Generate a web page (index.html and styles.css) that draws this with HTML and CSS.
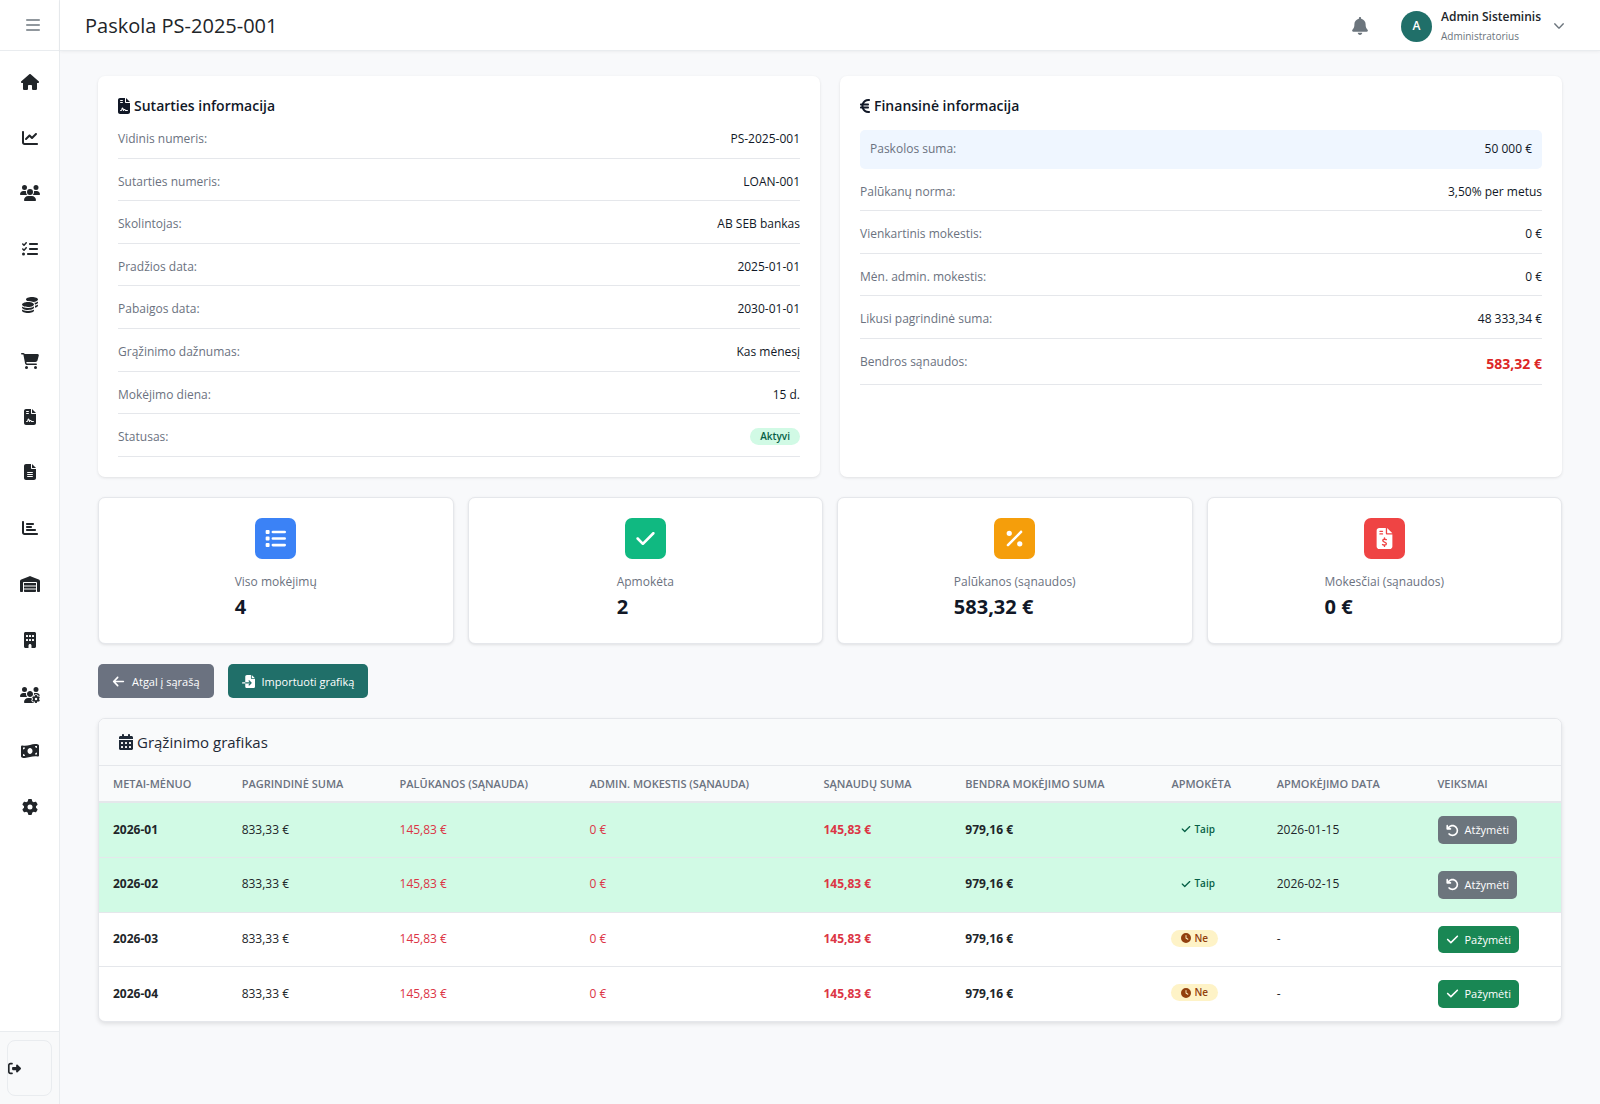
FILE: index.html
```html
<!DOCTYPE html>
<html lang="lt">
<head>
    <meta charset="UTF-8">
    <meta name="viewport" content="width=device-width, initial-scale=1.0">
    <title>Paskola PS-2025-001</title>
    <link rel="stylesheet" href="styles.css">
</head>
<body>
    <svg class="sprite" aria-hidden="true">
        <symbol id="i-bars" viewBox="0 0 448 512"><path d="M24 72h400a24 24 0 0 1 0 48H24a24 24 0 0 1 0-48zM24 232h400a24 24 0 0 1 0 48H24a24 24 0 0 1 0-48zM24 392h400a24 24 0 0 1 0 48H24a24 24 0 0 1 0-48z"/></symbol>
        <symbol id="i-home" viewBox="0 0 576 512"><path d="M575.8 255.5c0 18-15 32.1-32 32.1l-32 0 .7 160.2c0 2.7-.2 5.4-.5 8.1l0 16.2c0 22.1-17.9 40-40 40l-16 0c-1.1 0-2.2 0-3.3-.1c-1.4 .1-2.8 .1-4.2 .1L416 512l-24 0c-22.1 0-40-17.9-40-40l0-24 0-64c0-17.7-14.3-32-32-32l-64 0c-17.7 0-32 14.3-32 32l0 64 0 24c0 22.1-17.9 40-40 40l-24 0-31.9 0c-1.5 0-3-.1-4.5-.2c-1.2 .1-2.4 .2-3.6 .2l-16 0c-22.1 0-40-17.9-40-40l0-112c0-.9 0-1.9 .1-2.8l0-69.7-32 0c-18 0-32-14-32-32.1c0-9 3-17 10-24L266.4 8c7-7 15-8 22-8s15 2 21 7L564.8 231.5c8 7 12 15 11 24z"/></symbol>
        <symbol id="i-chart-line" viewBox="0 0 512 512"><path d="M64 64c0-17.7-14.3-32-32-32S0 46.3 0 64L0 400c0 44.2 35.8 80 80 80l400 0c17.7 0 32-14.3 32-32s-14.3-32-32-32L80 416c-8.8 0-16-7.2-16-16L64 64zm406.6 86.6c12.5-12.5 12.5-32.8 0-45.3s-32.8-12.5-45.3 0L320 210.7l-57.4-57.4c-12.5-12.5-32.8-12.5-45.3 0l-112 112c-12.5 12.5-12.5 32.8 0 45.3s32.8 12.5 45.3 0L240 221.3l57.4 57.4c12.5 12.5 32.8 12.5 45.3 0l128-128z"/></symbol>
        <symbol id="i-users" viewBox="0 0 640 512"><path d="M144 0a80 80 0 1 1 0 160A80 80 0 1 1 144 0zM512 0a80 80 0 1 1 0 160A80 80 0 1 1 512 0zM0 298.7C0 239.8 47.8 192 106.7 192l42.7 0c15.9 0 31 3.5 44.6 9.7c-1.3 7.2-1.9 14.7-1.9 22.3c0 38.2 16.8 72.5 43.3 96c-.2 0-.4 0-.7 0L21.3 320C9.6 320 0 310.4 0 298.7zM405.3 320c-.2 0-.4 0-.7 0c26.6-23.5 43.3-57.8 43.3-96c0-7.6-.7-15-1.9-22.3c13.6-6.3 28.7-9.7 44.6-9.7l42.7 0C592.2 192 640 239.8 640 298.7c0 11.8-9.6 21.3-21.3 21.3l-213.3 0zM224 224a96 96 0 1 1 192 0 96 96 0 1 1 -192 0zM128 485.3C128 411.7 187.7 352 261.3 352l117.3 0C452.3 352 512 411.7 512 485.3c0 14.7-11.9 26.7-26.7 26.7l-330.7 0c-14.7 0-26.7-11.9-26.7-26.7z"/></symbol>
        <symbol id="i-tasks" viewBox="0 0 512 512"><path d="M152.1 38.2c9.9 8.9 10.7 24 1.8 33.9l-72 80c-4.4 4.9-10.6 7.8-17.2 7.9s-12.9-2.4-17.6-7L7 113C-2.3 103.6-2.3 88.4 7 79s24.6-9.4 33.9 0l22.1 22.1 55.1-61.2c8.9-9.9 24-10.7 33.9-1.8zm0 160c9.9 8.9 10.7 24 1.8 33.9l-72 80c-4.4 4.9-10.6 7.8-17.2 7.9s-12.9-2.4-17.6-7L7 273c-9.4-9.4-9.4-24.6 0-33.9s24.6-9.4 33.9 0l22.1 22.1 55.1-61.2c8.9-9.9 24-10.7 33.9-1.8zM224 96c0-17.7 14.3-32 32-32l224 0c17.7 0 32 14.3 32 32s-14.3 32-32 32l-224 0c-17.7 0-32-14.3-32-32zm0 160c0-17.7 14.3-32 32-32l224 0c17.7 0 32 14.3 32 32s-14.3 32-32 32l-224 0c-17.7 0-32-14.3-32-32zM160 416c0-17.7 14.3-32 32-32l288 0c17.7 0 32 14.3 32 32s-14.3 32-32 32l-288 0c-17.7 0-32-14.3-32-32zM48 368a48 48 0 1 1 0 96 48 48 0 1 1 0-96z"/></symbol>
        <symbol id="i-coins" viewBox="0 0 512 512"><path d="M512 80c0 18-14.3 34.6-38.4 48c-29.1 16.1-72.5 27.5-122.3 30.9c-3.7-1.8-7.4-3.5-11.3-5C300.6 137.4 248.2 128 192 128c-8.3 0-16.4 .2-24.5 .6l-1.1-.6C142.3 114.6 128 98 128 80c0-44.2 86-80 192-80S512 35.8 512 80zM160.7 161.1c10.2-.7 20.7-1.1 31.3-1.1c62.2 0 117.4 12.3 152.5 31.4C369.3 204.9 384 221.7 384 240c0 4-.7 7.9-2.1 11.7c-4.6 13.2-17 25.3-35 35.5c-.4 .2-.9 .5-1.3 .7c-35 19.4-90.8 32-153.6 32c-59.6 0-112.9-11.3-148.2-29.1c-1.9-.9-3.7-1.9-5.5-2.9C14.3 274.6 0 258 0 240c0-34.8 53.4-64.5 128-75.4c10.5-1.5 21.4-2.7 32.7-3.5zM416 240c0-21.9-10.6-39.9-24.1-53.4c28.3-4.4 54.2-11.4 76.2-20.5c16.3-6.8 31.5-15.2 43.9-25.5l0 35.4c0 19.3-16.5 37.1-43.8 50.9c-14.6 7.4-32.4 13.7-52.4 18.5c.1-1.8 .2-3.5 .2-5.3zm-32 96c0 18-14.3 34.6-38.4 48c-1.8 1-3.6 1.9-5.5 2.9C304.9 404.7 251.6 416 192 416c-62.8 0-118.6-12.6-153.6-32C14.3 370.6 0 354 0 336l0-35.4c12.5 10.3 27.6 18.7 43.9 25.5C83.4 342.6 135.8 352 192 352s108.6-9.4 148.1-25.9c7.8-3.2 15.3-6.9 22.4-10.9c6.1-3.4 11.8-7.2 17.2-11.2c1.5-1.1 2.9-2.3 4.3-3.4l0 3.4 0 5.7 0 26.3zm32 0l0-32 0-25.9c19-4.2 36.5-9.5 52.1-16c16.3-6.8 31.5-15.2 43.9-25.5l0 35.4c0 10.5-5 21-14.9 30.9c-16.3 16.3-45 29.7-81.3 38.4c.1-1.7 .2-3.5 .2-5.3zM192 448c56.2 0 108.6-9.4 148.1-25.9c16.3-6.8 31.5-15.2 43.9-25.5l0 35.4c0 44.2-86 80-192 80S0 476.2 0 432l0-35.4c12.5 10.3 27.6 18.7 43.9 25.5C83.4 438.6 135.8 448 192 448z"/></symbol>
        <symbol id="i-cart" viewBox="0 0 576 512"><path d="M0 24C0 10.7 10.7 0 24 0L69.5 0c22 0 41.5 12.8 50.6 32l411 0c26.3 0 45.5 25 38.6 50.4l-41 152.3c-8.5 31.4-37 53.3-69.5 53.3l-288.5 0 5.4 28.5c2.2 11.3 12.1 19.5 23.6 19.5L488 336c13.3 0 24 10.7 24 24s-10.7 24-24 24l-288.3 0c-34.6 0-64.3-24.6-70.7-58.5L77.4 54.5c-.7-3.8-4-6.5-7.9-6.5L24 48C10.7 48 0 37.3 0 24zM128 464a48 48 0 1 1 96 0 48 48 0 1 1 -96 0zm336-48a48 48 0 1 1 0 96 48 48 0 1 1 0-96z"/></symbol>
        <symbol id="i-contract" viewBox="0 0 384 512"><path fill-rule="evenodd" d="M64 0C28.7 0 0 28.7 0 64L0 448c0 35.3 28.7 64 64 64l256 0c35.3 0 64-28.7 64-64l0-288-128 0c-17.7 0-32-14.3-32-32L224 0 64 0zM256 0l0 128 128 0L256 0zM80 64l64 0c8.8 0 16 7.2 16 16s-7.2 16-16 16L80 96c-8.8 0-16-7.2-16-16s7.2-16 16-16zm0 64l64 0c8.8 0 16 7.2 16 16s-7.2 16-16 16l-64 0c-8.8 0-16-7.2-16-16s7.2-16 16-16zm54.2 253.8c-6.1 20.3-24.8 34.2-46 34.2L80 416c-8.8 0-16-7.2-16-16s7.2-16 16-16l8.2 0c7.1 0 13.3-4.6 15.3-11.4l14.9-49.5c3.4-11.3 13.8-19.1 25.6-19.1s22.2 7.7 25.6 19.1l11.6 38.6c7.4-6.2 16.8-9.7 26.8-9.7c15.9 0 30.4 9 37.5 23.2l4.4 8.8 54.1 0c8.8 0 16 7.2 16 16s-7.2 16-16 16l-64 0c-6.1 0-11.6-3.4-14.3-8.8l-8.8-17.7c-1.7-3.4-5.1-5.5-8.8-5.5s-7.2 2.1-8.8 5.5l-8.8 17.7c-2.9 5.9-9.2 9.4-15.7 8.8s-12.1-5.1-13.9-11.3L144 349l-9.8 32.8z"/></symbol>
        <symbol id="i-file" viewBox="0 0 384 512"><path fill-rule="evenodd" d="M64 0C28.7 0 0 28.7 0 64L0 448c0 35.3 28.7 64 64 64l256 0c35.3 0 64-28.7 64-64l0-288-128 0c-17.7 0-32-14.3-32-32L224 0 64 0zM256 0l0 128 128 0L256 0zM112 256l160 0c8.8 0 16 7.2 16 16s-7.2 16-16 16l-160 0c-8.8 0-16-7.2-16-16s7.2-16 16-16zm0 64l160 0c8.8 0 16 7.2 16 16s-7.2 16-16 16l-160 0c-8.8 0-16-7.2-16-16s7.2-16 16-16zm0 64l160 0c8.8 0 16 7.2 16 16s-7.2 16-16 16l-160 0c-8.8 0-16-7.2-16-16s7.2-16 16-16z"/></symbol>
        <symbol id="i-chart-bar" viewBox="0 0 512 512"><path d="M32 32c17.7 0 32 14.3 32 32l0 336c0 8.8 7.2 16 16 16l400 0c17.7 0 32 14.3 32 32s-14.3 32-32 32L80 480c-44.2 0-80-35.8-80-80L0 64C0 46.3 14.3 32 32 32zm96 96c0-17.7 14.3-32 32-32l192 0c17.7 0 32 14.3 32 32s-14.3 32-32 32l-192 0c-17.7 0-32-14.3-32-32zm32 64l128 0c17.7 0 32 14.3 32 32s-14.3 32-32 32l-128 0c-17.7 0-32-14.3-32-32s14.3-32 32-32zm0 96l256 0c17.7 0 32 14.3 32 32s-14.3 32-32 32l-256 0c-17.7 0-32-14.3-32-32s14.3-32 32-32z"/></symbol>
        <symbol id="i-warehouse" viewBox="0 0 640 512"><path d="M0 488L0 171.3c0-26.2 15.9-49.7 40.2-59.4L308.1 4.8c7.6-3.1 16.1-3.1 23.8 0L599.8 111.9c24.3 9.7 40.2 33.3 40.2 59.4L640 488c0 13.3-10.7 24-24 24l-48 0c-13.3 0-24-10.7-24-24l0-264c0-17.7-14.3-32-32-32l-384 0c-17.7 0-32 14.3-32 32l0 264c0 13.3-10.7 24-24 24l-48 0c-13.3 0-24-10.7-24-24zm488 24l-336 0c-13.3 0-24-10.7-24-24l0-56 384 0 0 56c0 13.3-10.7 24-24 24zM128 400l0-64 384 0 0 64-384 0zm0-96l0-80 384 0 0 80-384 0z"/></symbol>
        <symbol id="i-building" viewBox="0 0 384 512"><path fill-rule="evenodd" d="M48 0C21.5 0 0 21.5 0 48L0 464c0 26.5 21.5 48 48 48l96 0 0-80c0-26.5 21.5-48 48-48s48 21.5 48 48l0 80 96 0c26.5 0 48-21.5 48-48l0-416c0-26.5-21.5-48-48-48L48 0zM80 96h32a16 16 0 0 1 16 16v32a16 16 0 0 1-16 16H80a16 16 0 0 1-16-16v-32a16 16 0 0 1 16-16zM176 96h32a16 16 0 0 1 16 16v32a16 16 0 0 1-16 16h-32a16 16 0 0 1-16-16v-32a16 16 0 0 1 16-16zM272 96h32a16 16 0 0 1 16 16v32a16 16 0 0 1-16 16h-32a16 16 0 0 1-16-16v-32a16 16 0 0 1 16-16zM80 224h32a16 16 0 0 1 16 16v32a16 16 0 0 1-16 16H80a16 16 0 0 1-16-16v-32a16 16 0 0 1 16-16zM176 224h32a16 16 0 0 1 16 16v32a16 16 0 0 1-16 16h-32a16 16 0 0 1-16-16v-32a16 16 0 0 1 16-16zM272 224h32a16 16 0 0 1 16 16v32a16 16 0 0 1-16 16h-32a16 16 0 0 1-16-16v-32a16 16 0 0 1 16-16z"/></symbol>
        <symbol id="i-users-cog" viewBox="0 0 640 512"><path d="M144 160A80 80 0 1 0 144 0a80 80 0 1 0 0 160zm368 0A80 80 0 1 0 512 0a80 80 0 1 0 0 160zM0 298.7C0 310.4 9.6 320 21.3 320l213.3 0c.2 0 .4 0 .7 0c-26.6-23.5-43.3-57.8-43.3-96c0-7.6 .7-15 1.9-22.3c-13.6-6.3-28.7-9.7-44.6-9.7l-42.7 0C47.8 192 0 239.8 0 298.7zM320 320c24 0 45.9-8.8 62.7-23.3c2.5-3.7 5.2-7.3 8-10.7c2.7-3.3 5.7-6.1 9-8.3C410 262.3 416 243.9 416 224c0-53-43-96-96-96s-96 43-96 96s43 96 96 96zm65.4 60.2c-10.3-5.9-18.1-16.2-20.8-28.2l-103.2 0C187.7 352 128 411.7 128 485.3c0 14.7 11.9 26.7 26.7 26.7l300.6 0c-2.1-5.2-3.2-10.9-3.2-16.4l0-3c-1.3-.7-2.7-1.5-4-2.3l-2.6 1.5c-16.8 9.7-40.5 8-54.7-9.7c-4.5-5.6-8.6-11.5-12.4-17.6l-2.6-4.5-.2-.4c-3.4-6.2-6.4-12.6-9-19.3c-8.2-21.2 2.2-42.6 19-52.3l2.7-1.5c0-.8 0-1.5 0-2.3s0-1.5 0-2.3l-2.7-1.5zM533.3 192l-42.7 0c-15.9 0-31 3.5-44.6 9.7c1.3 7.2 1.9 14.7 1.9 22.3c0 17.4-3.5 33.9-9.7 49c2.5 .9 4.9 2 7.1 3.3l2.6 1.5c1.3-.8 2.6-1.6 4-2.3l0-3c0-19.4 13.3-39.1 35.8-42.6c7.9-1.2 16-1.9 24.2-1.9s16.3 .6 24.2 1.9c22.5 3.5 35.8 23.2 35.8 42.6l0 3c1.3 .7 2.7 1.5 4 2.3l2.6-1.5c16.8-9.7 40.5-8 54.7 9.7c2.3 2.8 4.5 5.8 6.6 8.7c-2.1-57.1-49-102.7-106.6-102.7zm91.3 163.9c6.3-3.6 9.5-11.1 6.8-18c-2.1-5.5-4.6-10.8-7.4-15.9l-2.3-4c-3.1-5.1-6.5-9.9-10.2-14.5c-4.6-5.7-12.7-6.7-19-3l-2.9 1.7c-9.2 5.3-20.4 4-29.6-1.3s-16.1-14.5-16.1-25.1l0-3.4c0-7.3-4.9-13.8-12.1-14.9c-6.5-1-13.1-1.5-19.9-1.5s-13.4 .5-19.9 1.5c-7.2 1.1-12.1 7.6-12.1 14.9l0 3.4c0 10.6-6.9 19.8-16.1 25.1s-20.4 6.6-29.6 1.3l-2.9-1.7c-6.3-3.6-14.4-2.6-19 3c-3.7 4.6-7.1 9.5-10.2 14.6l-2.3 3.9c-2.8 5.1-5.3 10.4-7.4 15.9c-2.6 6.8 .5 14.3 6.8 17.9l2.9 1.7c9.2 5.3 13.7 15.8 13.7 26.4s-4.5 21.1-13.7 26.4l-3 1.7c-6.3 3.6-9.5 11.1-6.8 17.9c2.1 5.5 4.6 10.7 7.4 15.8l2.4 4.1c3 5.1 6.4 9.9 10.1 14.5c4.6 5.7 12.7 6.7 19 3l2.9-1.7c9.2-5.3 20.4-4 29.6 1.3s16.1 14.5 16.1 25.1l0 3.4c0 7.3 4.9 13.8 12.1 14.9c6.5 1 13.1 1.5 19.9 1.5s13.4-.5 19.9-1.5c7.2-1.1 12.1-7.6 12.1-14.9l0-3.4c0-10.6 6.9-19.8 16.1-25.1s20.4-6.6 29.6-1.3l2.9 1.7c6.3 3.6 14.4 2.6 19-3c3.7-4.6 7.1-9.4 10.1-14.5l2.4-4.2c2.8-5.1 5.3-10.3 7.4-15.8c2.6-6.8-.5-14.3-6.8-17.9l-3-1.7c-9.2-5.3-13.7-15.8-13.7-26.4s4.5-21.1 13.7-26.4l3-1.7zM472 384a40 40 0 1 1 80 0 40 40 0 1 1 -80 0z"/></symbol>
        <symbol id="i-money" viewBox="0 0 576 512"><path fill-rule="evenodd" d="M0 112.5L0 422.3c0 18 10.1 35 27 41.3c87 32.5 174 10.3 261-11.9c79.8-20.3 159.6-40.7 239.3-18.9c23 6.3 48.7-9.5 48.7-33.4l0-309.9c0-18-10.1-35-27-41.3C462 15.9 375 38.1 288 60.3C208.2 80.6 128.4 100.9 48.7 79.1C25.6 72.8 0 88.6 0 112.5zM288 352c-44.2 0-80-43-80-96s35.8-96 80-96s80 43 80 96s-35.8 96-80 96zM64 352c35.3 0 64 28.7 64 64l-64 0 0-64zm64-208c0 35.3-28.7 64-64 64l0-64 64 0zM512 304l0 64-64 0c0-35.3 28.7-64 64-64zM448 96l64 0 0 64c-35.3 0-64-28.7-64-64z"/></symbol>
        <symbol id="i-cog" viewBox="0 0 512 512"><path fill-rule="evenodd" d="M495.9 166.6c3.2 8.7 .5 18.4-6.4 24.6l-43.3 39.4c1.1 8.3 1.7 16.8 1.7 25.4s-.6 17.1-1.7 25.4l43.3 39.4c6.9 6.2 9.6 15.9 6.4 24.6c-4.4 11.9-9.7 23.3-15.8 34.3l-4.7 8.1c-6.6 11-14 21.4-22.1 31.2c-5.9 7.2-15.7 9.6-24.5 6.8l-55.7-17.7c-13.4 10.3-28.2 18.9-44 25.4l-12.5 57.1c-2 9.1-9 16.3-18.2 17.8c-13.8 2.3-28 3.5-42.5 3.5s-28.7-1.2-42.5-3.5c-9.2-1.5-16.2-8.7-18.2-17.8l-12.5-57.1c-15.8-6.5-30.6-15.1-44-25.4L83.1 425.9c-8.8 2.8-18.6 .3-24.5-6.8c-8.1-9.8-15.5-20.2-22.1-31.2l-4.7-8.1c-6.1-11-11.4-22.4-15.8-34.3c-3.2-8.7-.5-18.4 6.4-24.6l43.3-39.4C64.6 273.1 64 264.6 64 256s.6-17.1 1.7-25.4L22.4 191.2c-6.9-6.2-9.6-15.9-6.4-24.6c4.4-11.9 9.7-23.3 15.8-34.3l4.7-8.1c6.6-11 14-21.4 22.1-31.2c5.9-7.2 15.7-9.6 24.5-6.8l55.7 17.7c13.4-10.3 28.2-18.9 44-25.4l12.5-57.1c2-9.1 9-16.3 18.2-17.8C227.3 1.2 241.5 0 256 0s28.7 1.2 42.5 3.5c9.2 1.5 16.2 8.7 18.2 17.8l12.5 57.1c15.8 6.5 30.6 15.1 44 25.4l55.7-17.7c8.8-2.8 18.6-.3 24.5 6.8c8.1 9.8 15.5 20.2 22.1 31.2l4.7 8.1c6.1 11 11.4 22.4 15.8 34.3zM256 336a80 80 0 1 0 0-160 80 80 0 1 0 0 160z"/></symbol>
        <symbol id="i-logout" viewBox="0 0 512 512"><path d="M377.9 105.9L500.7 228.7c7.2 7.2 11.3 17.1 11.3 27.3s-4.1 20.1-11.3 27.3L377.9 406.1c-6.4 6.4-15 9.9-24 9.9c-18.7 0-33.9-15.2-33.9-33.9l0-62.1-128 0c-17.7 0-32-14.3-32-32l0-64c0-17.7 14.3-32 32-32l128 0 0-62.1c0-18.7 15.2-33.9 33.9-33.9c9 0 17.6 3.6 24 9.9zM160 96L96 96c-17.7 0-32 14.3-32 32l0 256c0 17.7 14.3 32 32 32l64 0c17.7 0 32 14.3 32 32s-14.3 32-32 32l-64 0c-53 0-96-43-96-96L0 128C0 75 43 32 96 32l64 0c17.7 0 32 14.3 32 32s-14.3 32-32 32z"/></symbol>
        <symbol id="i-bell" viewBox="0 0 448 512"><path d="M224 0c-17.7 0-32 14.3-32 32l0 19.2C119 66 64 130.6 64 208l0 18.8c0 47-17.3 92.4-48.5 127.6l-7.4 8.3c-8.4 9.4-10.4 22.9-5.3 34.4S19.4 416 32 416l384 0c12.6 0 24-7.4 29.2-18.9s3.1-25-5.3-34.4l-7.4-8.3C401.3 319.2 384 273.9 384 226.8l0-18.8c0-77.4-55-142-128-156.8L256 32c0-17.7-14.3-32-32-32zm45.3 493.3c12-12 18.7-28.3 18.7-45.3l-64 0-64 0c0 17 6.7 33.3 18.7 45.3s28.3 18.7 45.3 18.7s33.3-6.7 45.3-18.7z"/></symbol>
        <symbol id="i-chevron" viewBox="0 0 448 512"><path d="M201.4 374.6c12.5 12.5 32.8 12.5 45.3 0l192-192c12.5-12.5 12.5-32.8 0-45.3s-32.8-12.5-45.3 0L224 306.7 54.6 137.4c-12.5-12.5-32.8-12.5-45.3 0s-12.5 32.8 0 45.3l192 192z"/></symbol>
        <symbol id="i-euro" viewBox="0 0 320 512"><path d="M48.1 240c-.1 2.7-.1 5.3-.1 8l0 16c0 2.7 0 5.3 .1 8L32 272c-17.7 0-32 14.3-32 32s14.3 32 32 32l28.3 0C89.9 419.9 170 480 264 480l24 0c17.7 0 32-14.3 32-32s-14.3-32-32-32l-24 0c-57.9 0-108.2-32.4-133.9-80L256 336c17.7 0 32-14.3 32-32s-14.3-32-32-32l-143.8 0c-.1-2.6-.2-5.3-.2-8l0-16c0-2.7 .1-5.4 .2-8L256 240c17.7 0 32-14.3 32-32s-14.3-32-32-32l-125.9 0c25.7-47.6 76-80 133.9-80l24 0c17.7 0 32-14.3 32-32s-14.3-32-32-32l-24 0C170 32 89.9 92.1 60.3 176L32 176c-17.7 0-32 14.3-32 32s14.3 32 32 32l16.1 0z"/></symbol>
        <symbol id="i-list" viewBox="0 0 512 512"><path d="M40 48h48a24 24 0 0 1 24 24v48a24 24 0 0 1-24 24H40a24 24 0 0 1-24-24V72a24 24 0 0 1 24-24zM40 208h48a24 24 0 0 1 24 24v48a24 24 0 0 1-24 24H40a24 24 0 0 1-24-24v-48a24 24 0 0 1 24-24zM40 368h48a24 24 0 0 1 24 24v48a24 24 0 0 1-24 24H40a24 24 0 0 1-24-24v-48a24 24 0 0 1 24-24zM192 64h288a32 32 0 0 1 0 64H192a32 32 0 0 1 0-64zM192 224h288a32 32 0 0 1 0 64H192a32 32 0 0 1 0-64zM192 384h288a32 32 0 0 1 0 64H192a32 32 0 0 1 0-64z"/></symbol>
        <symbol id="i-check" viewBox="0 0 448 512"><path d="M438.6 105.4c12.5 12.5 12.5 32.8 0 45.3l-256 256c-12.5 12.5-32.8 12.5-45.3 0l-128-128c-12.5-12.5-12.5-32.8 0-45.3s32.8-12.5 45.3 0L160 338.7 393.4 105.4c12.5-12.5 32.8-12.5 45.3 0z"/></symbol>
        <symbol id="i-percent" viewBox="0 0 384 512"><path d="M374.6 118.6c12.5-12.5 12.5-32.8 0-45.3s-32.8-12.5-45.3 0l-320 320c-12.5 12.5-12.5 32.8 0 45.3s32.8 12.5 45.3 0l320-320zM128 128A64 64 0 1 0 0 128a64 64 0 1 0 128 0zM384 384a64 64 0 1 0 -128 0 64 64 0 1 0 128 0z"/></symbol>
        <symbol id="i-invoice" viewBox="0 0 384 512"><path fill-rule="evenodd" d="M64 0C28.7 0 0 28.7 0 64L0 448c0 35.3 28.7 64 64 64l256 0c35.3 0 64-28.7 64-64l0-288-128 0c-17.7 0-32-14.3-32-32L224 0 64 0zM256 0l0 128 128 0L256 0zM80 64l64 0c8.8 0 16 7.2 16 16s-7.2 16-16 16L80 96c-8.8 0-16-7.2-16-16s7.2-16 16-16zm0 64l64 0c8.8 0 16 7.2 16 16s-7.2 16-16 16l-64 0c-8.8 0-16-7.2-16-16s7.2-16 16-16z"/><path class="cut" d="M192 240v32M192 416v32M236 284c-16-6-32-10-46-10c-24 0-40 12-40 32c0 22 20 30 42 37c26 8 46 17 46 40c0 21-18 33-44 33c-18 0-34-6-50-13"/></symbol>
        <symbol id="i-import" viewBox="0 0 512 512"><path d="M128 64c0-35.3 28.7-64 64-64L352 0l0 128c0 17.7 14.3 32 32 32l128 0 0 288c0 35.3-28.7 64-64 64l-256 0c-35.3 0-64-28.7-64-64l0-112 174.1 0-39 39c-9.4 9.4-9.4 24.6 0 33.9s24.6 9.4 33.9 0l80-80c9.4-9.4 9.4-24.6 0-33.9l-80-80c-9.4-9.4-24.6-9.4-33.9 0s-9.4 24.6 0 33.9l39 39L128 288l0-224zm0 224l0 48L24 336c-13.3 0-24-10.7-24-24s10.7-24 24-24l104 0zM512 128l-128 0L384 0 512 128z"/></symbol>
        <symbol id="i-back" viewBox="0 0 448 512"><path d="M9.4 233.4c-12.5 12.5-12.5 32.8 0 45.3l160 160c12.5 12.5 32.8 12.5 45.3 0s12.5-32.8 0-45.3L109.2 288 416 288c17.7 0 32-14.3 32-32s-14.3-32-32-32l-306.7 0L214.6 118.6c12.5-12.5 12.5-32.8 0-45.3s-32.8-12.5-45.3 0l-160 160z"/></symbol>
        <symbol id="i-calendar" viewBox="0 0 448 512"><path fill-rule="evenodd" d="M128 0c17.7 0 32 14.3 32 32l0 32 128 0 0-32c0-17.7 14.3-32 32-32s32 14.3 32 32l0 32 48 0c26.5 0 48 21.5 48 48l0 48L0 160l0-48C0 85.5 21.5 64 48 64l48 0 0-32c0-17.7 14.3-32 32-32zM0 192l448 0 0 272c0 26.5-21.5 48-48 48L48 512c-26.5 0-48-21.5-48-48L0 192zM80 256h32a16 16 0 0 1 16 16v32a16 16 0 0 1-16 16H80a16 16 0 0 1-16-16v-32a16 16 0 0 1 16-16zM208 256h32a16 16 0 0 1 16 16v32a16 16 0 0 1-16 16h-32a16 16 0 0 1-16-16v-32a16 16 0 0 1 16-16zM336 256h32a16 16 0 0 1 16 16v32a16 16 0 0 1-16 16h-32a16 16 0 0 1-16-16v-32a16 16 0 0 1 16-16zM80 384h32a16 16 0 0 1 16 16v32a16 16 0 0 1-16 16H80a16 16 0 0 1-16-16v-32a16 16 0 0 1 16-16zM208 384h32a16 16 0 0 1 16 16v32a16 16 0 0 1-16 16h-32a16 16 0 0 1-16-16v-32a16 16 0 0 1 16-16zM336 384h32a16 16 0 0 1 16 16v32a16 16 0 0 1-16 16h-32a16 16 0 0 1-16-16v-32a16 16 0 0 1 16-16z"/></symbol>
        <symbol id="i-undo" viewBox="0 0 512 512"><path d="M125.7 160l50.3 0c17.7 0 32 14.3 32 32s-14.3 32-32 32L48 224c-17.7 0-32-14.3-32-32L16 64c0-17.7 14.3-32 32-32s32 14.3 32 32l0 51.2L97.6 97.6c87.5-87.5 229.3-87.5 316.8 0s87.5 229.3 0 316.8s-229.3 87.5-316.8 0c-12.5-12.5-12.5-32.8 0-45.3s32.8-12.5 45.3 0c62.5 62.5 163.8 62.5 226.3 0s62.5-163.8 0-226.3s-163.8-62.5-226.3 0L125.7 160z"/></symbol>
        <symbol id="i-clock" viewBox="0 0 512 512"><path fill-rule="evenodd" d="M256 0a256 256 0 1 1 0 512A256 256 0 1 1 256 0zM232 120l0 136c0 8 4 15.5 10.7 20l96 64c11 7.4 25.9 4.4 33.3-6.7s4.4-25.9-6.7-33.3L280 243.2 280 120c0-13.3-10.7-24-24-24s-24 10.7-24 24z"/></symbol>
    </svg>

    <div class="layout">
        <aside class="sidebar">
            <div class="sidebar-header">
                <button class="icon-btn" type="button" aria-label="Meniu"><svg class="icon"><use href="#i-bars"/></svg></button>
            </div>
            <nav class="sidebar-nav">
                <a href="#" aria-label="Pradžia"><svg class="icon"><use href="#i-home"/></svg></a>
                <a href="#" aria-label="Analitika"><svg class="icon"><use href="#i-chart-line"/></svg></a>
                <a href="#" aria-label="Klientai"><svg class="icon"><use href="#i-users"/></svg></a>
                <a href="#" aria-label="Užduotys"><svg class="icon"><use href="#i-tasks"/></svg></a>
                <a href="#" aria-label="Finansai"><svg class="icon"><use href="#i-coins"/></svg></a>
                <a href="#" aria-label="Pirkimai"><svg class="icon"><use href="#i-cart"/></svg></a>
                <a href="#" aria-label="Sutartys"><svg class="icon"><use href="#i-contract"/></svg></a>
                <a href="#" aria-label="Dokumentai"><svg class="icon"><use href="#i-file"/></svg></a>
                <a href="#" aria-label="Ataskaitos"><svg class="icon"><use href="#i-chart-bar"/></svg></a>
                <a href="#" aria-label="Sandėlis"><svg class="icon"><use href="#i-warehouse"/></svg></a>
                <a href="#" aria-label="Turtas"><svg class="icon"><use href="#i-building"/></svg></a>
                <a href="#" aria-label="Vartotojai"><svg class="icon"><use href="#i-users-cog"/></svg></a>
                <a href="#" aria-label="Paskolos"><svg class="icon"><use href="#i-money"/></svg></a>
                <a href="#" aria-label="Nustatymai"><svg class="icon"><use href="#i-cog"/></svg></a>
            </nav>
            <div class="sidebar-footer">
                <a href="#" class="logout" aria-label="Atsijungti"><svg class="icon"><use href="#i-logout"/></svg></a>
            </div>
        </aside>

        <div class="main">
            <header class="topbar">
                <h1>Paskola PS-2025-001</h1>
                <div class="topbar-right">
                    <button class="icon-btn bell" type="button" aria-label="Pranešimai"><svg class="icon"><use href="#i-bell"/></svg></button>
                    <button class="user-menu" type="button">
                        <span class="avatar">A</span>
                        <span class="user-info">
                            <span class="user-name">Admin Sisteminis</span>
                            <span class="user-role">Administratorius</span>
                        </span>
                        <svg class="icon"><use href="#i-chevron"/></svg>
                    </button>
                </div>
            </header>

            <main class="content">
                <div class="info-grid">
                    <section class="info-card">
                        <h2 class="card-title"><svg class="icon"><use href="#i-contract"/></svg>Sutarties informacija</h2>
                        <div class="info-row"><span class="label">Vidinis numeris:</span><span class="value">PS-2025-001</span></div>
                        <div class="info-row"><span class="label">Sutarties numeris:</span><span class="value">LOAN-001</span></div>
                        <div class="info-row"><span class="label">Skolintojas:</span><span class="value">AB SEB bankas</span></div>
                        <div class="info-row"><span class="label">Pradžios data:</span><span class="value">2025-01-01</span></div>
                        <div class="info-row"><span class="label">Pabaigos data:</span><span class="value">2030-01-01</span></div>
                        <div class="info-row"><span class="label">Grąžinimo dažnumas:</span><span class="value">Kas mėnesį</span></div>
                        <div class="info-row"><span class="label">Mokėjimo diena:</span><span class="value">15 d.</span></div>
                        <div class="info-row"><span class="label">Statusas:</span><span class="badge badge-success">Aktyvi</span></div>
                    </section>
                    <section class="info-card">
                        <h2 class="card-title"><svg class="icon icon-euro"><use href="#i-euro"/></svg>Finansinė informacija</h2>
                        <div class="info-row highlight"><span class="label">Paskolos suma:</span><span class="value">50 000 €</span></div>
                        <div class="info-row"><span class="label">Palūkanų norma:</span><span class="value">3,50% per metus</span></div>
                        <div class="info-row"><span class="label">Vienkartinis mokestis:</span><span class="value">0 €</span></div>
                        <div class="info-row"><span class="label">Mėn. admin. mokestis:</span><span class="value">0 €</span></div>
                        <div class="info-row"><span class="label">Likusi pagrindinė suma:</span><span class="value">48 333,34 €</span></div>
                        <div class="info-row"><span class="label">Bendros sąnaudos:</span><span class="value total">583,32 €</span></div>
                    </section>
                </div>

                <div class="stats-grid">
                    <div class="stat-card">
                        <div class="stat-icon blue"><svg class="icon"><use href="#i-list"/></svg></div>
                        <div><div class="stat-label">Viso mokėjimų</div><div class="stat-value">4</div></div>
                    </div>
                    <div class="stat-card">
                        <div class="stat-icon green"><svg class="icon"><use href="#i-check"/></svg></div>
                        <div><div class="stat-label">Apmokėta</div><div class="stat-value">2</div></div>
                    </div>
                    <div class="stat-card">
                        <div class="stat-icon orange"><svg class="icon"><use href="#i-percent"/></svg></div>
                        <div><div class="stat-label">Palūkanos (sąnaudos)</div><div class="stat-value">583,32 €</div></div>
                    </div>
                    <div class="stat-card">
                        <div class="stat-icon red"><svg class="icon"><use href="#i-invoice"/></svg></div>
                        <div><div class="stat-label">Mokesčiai (sąnaudos)</div><div class="stat-value">0 €</div></div>
                    </div>
                </div>

                <div class="actions">
                    <a href="#" class="btn btn-back"><svg class="icon"><use href="#i-back"/></svg>Atgal į sąrašą</a>
                    <button type="button" class="btn btn-primary"><svg class="icon"><use href="#i-import"/></svg>Importuoti grafiką</button>
                </div>

                <section class="table-card">
                    <h2 class="table-title"><svg class="icon"><use href="#i-calendar"/></svg>Grąžinimo grafikas</h2>
                    <table>
                        <thead>
                            <tr>
                                <th class="col-month">Metai-mėnuo</th>
                                <th class="col-principal">Pagrindinė suma</th>
                                <th class="col-interest">Palūkanos (sąnauda)</th>
                                <th class="col-fee">Admin. mokestis (sąnauda)</th>
                                <th class="col-cost">Sąnaudų suma</th>
                                <th class="col-total">Bendra mokėjimo suma</th>
                                <th class="col-paid">Apmokėta</th>
                                <th class="col-date">Apmokėjimo data</th>
                                <th>Veiksmai</th>
                            </tr>
                        </thead>
                        <tbody>
                            <tr class="paid">
                                <td><strong>2026-01</strong></td>
                                <td>833,33 €</td>
                                <td class="cost">145,83 €</td>
                                <td class="cost">0 €</td>
                                <td class="cost"><strong>145,83 €</strong></td>
                                <td><strong>979,16 €</strong></td>
                                <td><span class="badge badge-success"><svg class="icon"><use href="#i-check"/></svg>Taip</span></td>
                                <td>2026-01-15</td>
                                <td><button type="button" class="btn-sm btn-secondary"><svg class="icon"><use href="#i-undo"/></svg>Atžymėti</button></td>
                            </tr>
                            <tr class="paid">
                                <td><strong>2026-02</strong></td>
                                <td>833,33 €</td>
                                <td class="cost">145,83 €</td>
                                <td class="cost">0 €</td>
                                <td class="cost"><strong>145,83 €</strong></td>
                                <td><strong>979,16 €</strong></td>
                                <td><span class="badge badge-success"><svg class="icon"><use href="#i-check"/></svg>Taip</span></td>
                                <td>2026-02-15</td>
                                <td><button type="button" class="btn-sm btn-secondary"><svg class="icon"><use href="#i-undo"/></svg>Atžymėti</button></td>
                            </tr>
                            <tr>
                                <td><strong>2026-03</strong></td>
                                <td>833,33 €</td>
                                <td class="cost">145,83 €</td>
                                <td class="cost">0 €</td>
                                <td class="cost"><strong>145,83 €</strong></td>
                                <td><strong>979,16 €</strong></td>
                                <td><span class="badge badge-warning"><svg class="icon"><use href="#i-clock"/></svg>Ne</span></td>
                                <td>-</td>
                                <td><button type="button" class="btn-sm btn-success"><svg class="icon"><use href="#i-check"/></svg>Pažymėti</button></td>
                            </tr>
                            <tr>
                                <td><strong>2026-04</strong></td>
                                <td>833,33 €</td>
                                <td class="cost">145,83 €</td>
                                <td class="cost">0 €</td>
                                <td class="cost"><strong>145,83 €</strong></td>
                                <td><strong>979,16 €</strong></td>
                                <td><span class="badge badge-warning"><svg class="icon"><use href="#i-clock"/></svg>Ne</span></td>
                                <td>-</td>
                                <td><button type="button" class="btn-sm btn-success"><svg class="icon"><use href="#i-check"/></svg>Pažymėti</button></td>
                            </tr>
                        </tbody>
                    </table>
                </section>
            </main>
        </div>
    </div>
</body>
</html>
```
FILE: styles.css
```css
* {
    margin: 0;
    padding: 0;
    box-sizing: border-box;
}

body {
    font-family: "Segoe UI", "Open Sans", "Noto Sans", sans-serif;
    font-size: 12px;
    line-height: 1.55;
    color: #212529;
    background: #f8f9fb;
}

a {
    color: inherit;
    text-decoration: none;
}

button {
    font: inherit;
    color: inherit;
    background: none;
    border: none;
    cursor: pointer;
}

.sprite {
    display: none;
}

.icon {
    width: 16px;
    height: 16px;
    fill: currentColor;
    flex-shrink: 0;
}

.cut {
    fill: none;
    stroke: #ef4444;
    stroke-width: 34;
    stroke-linecap: round;
}

.layout {
    display: flex;
    min-height: 100vh;
}

/* Sidebar */
.sidebar {
    display: flex;
    flex-direction: column;
    width: 60px;
    background: #fff;
    border-right: 1px solid #e9ecef;
}

.sidebar-header {
    display: flex;
    align-items: center;
    justify-content: center;
    height: 51px;
    padding-left: 6px;
    border-bottom: 1px solid #e9ecef;
}

.icon-btn {
    display: flex;
    color: #6c757d;
}

.sidebar-nav {
    flex: 1;
    display: flex;
    flex-direction: column;
    padding: 3px 0 196px;
}

.sidebar-nav a {
    flex: 1;
    display: flex;
    align-items: center;
    justify-content: center;
}

.sidebar-nav .icon {
    width: 20px;
}

.sidebar-footer {
    padding: 8px 7px;
    background: #f8f9fa;
    border-top: 1px solid #e9ecef;
}

.logout {
    display: flex;
    align-items: center;
    height: 56px;
    border: 1px solid #e9ecef;
    border-radius: 8px;
}

.logout .icon {
    width: 13px;
    height: 13px;
}

/* Top bar */
.main {
    flex: 1;
    min-width: 0;
}

.topbar {
    display: flex;
    align-items: center;
    justify-content: space-between;
    height: 51px;
    padding: 2px 36px 0 25px;
    background: #fff;
    border-bottom: 1px solid #e9ecef;
    box-shadow: 0 1px 3px rgba(0, 0, 0, 0.05);
}

.topbar h1 {
    font-size: 20px;
    font-weight: 500;
    line-height: 30px;
}

.topbar-right {
    display: flex;
    align-items: center;
    gap: 32px;
}

.bell .icon {
    width: 18px;
    height: 18px;
}

.user-menu {
    display: flex;
    align-items: center;
    gap: 9px;
    text-align: left;
}

.user-menu .icon {
    width: 10px;
    height: 12px;
    margin-left: 4px;
    color: #6c757d;
}

.avatar {
    display: flex;
    align-items: center;
    justify-content: center;
    width: 31px;
    height: 31px;
    border-radius: 50%;
    background: #206f69;
    color: #fff;
    font-weight: 600;
}

.user-info {
    display: flex;
    flex-direction: column;
}

.user-name {
    font-weight: 600;
    line-height: 20px;
}

.user-role {
    font-size: 10px;
    line-height: 18px;
    color: #6c757d;
}

/* Content */
.content {
    display: flex;
    flex-direction: column;
    gap: 20px;
    padding: 25px 38px 40px;
}

.info-grid {
    display: grid;
    grid-template-columns: 1fr 1fr;
    gap: 20px;
}

.info-card {
    display: flex;
    flex-direction: column;
    gap: 14px;
    padding: 20px;
    background: #fff;
    border-radius: 7px;
    box-shadow: 0 1px 3px rgba(0, 0, 0, 0.1);
}

.card-title {
    display: flex;
    align-items: center;
    gap: 4px;
    font-size: 14px;
    font-weight: 600;
    line-height: 20px;
    color: #111827;
}

.card-title .icon {
    width: 12px;
}

.card-title .icon-euro {
    width: 10px;
}

.info-row {
    display: flex;
    align-items: flex-start;
    justify-content: space-between;
    padding-bottom: 9px;
    border-bottom: 1px solid #e5e7eb;
}

.info-row.highlight {
    padding: 10px;
    background: #eff6ff;
    border: none;
    border-radius: 5px;
}

.label,
.stat-label {
    color: #6b7280;
}

.value {
    color: #111827;
}

.value.total {
    font-size: 14px;
    font-weight: 700;
    color: #dc2626;
}

.badge {
    display: inline-flex;
    align-items: center;
    gap: 3px;
    padding: 0 10px;
    border-radius: 9px;
    font-size: 10px;
    font-weight: 600;
    line-height: 17px;
}

.badge .icon {
    width: 10px;
    height: 10px;
}

.badge-success {
    background: #d1fae5;
    color: #065f46;
}

.badge-warning {
    background: #fef3c7;
    color: #92400e;
}

/* Stats */
.stats-grid {
    display: grid;
    grid-template-columns: repeat(4, 1fr);
    gap: 14px;
}

.stat-card {
    display: flex;
    flex-direction: column;
    align-items: center;
    gap: 14px;
    padding: 20px;
    background: #fff;
    border: 1px solid #e5e7eb;
    border-radius: 7px;
    box-shadow: 0 1px 3px rgba(0, 0, 0, 0.1);
}

.stat-icon {
    display: flex;
    align-items: center;
    justify-content: center;
    width: 41px;
    height: 41px;
    border-radius: 7px;
    color: #fff;
}

.stat-icon .icon {
    width: 21px;
    height: 21px;
}

.blue {
    background: #3b82f6;
}

.green {
    background: #10b981;
}

.orange {
    background: #f59e0b;
}

.red {
    background: #ef4444;
}

.stat-value {
    font-size: 20px;
    font-weight: 700;
    line-height: 32px;
    color: #111827;
}

/* Buttons */
.actions {
    display: flex;
    gap: 14px;
}

.btn,
.btn-sm {
    display: inline-flex;
    align-items: center;
    border-radius: 5px;
    color: #fff;
    font-size: 11px;
    font-weight: 500;
}

.btn {
    gap: 7px;
    height: 34px;
    padding: 0 14px;
}

.btn-sm {
    gap: 6px;
    padding: 5px 8px;
    line-height: 1.6;
    vertical-align: middle;
}

.btn .icon,
.btn-sm .icon {
    width: 13px;
    height: 13px;
}

.btn-back {
    background: #6b7280;
}

.btn-primary {
    background: #206f69;
}

.btn-secondary {
    background: #6c757d;
}

.btn-success {
    background: #198754;
}

/* Schedule table */
.table-card {
    overflow: hidden;
    background: #fff;
    border: 1px solid #e5e7eb;
    border-radius: 7px;
    box-shadow: 0 2px 4px rgba(0, 0, 0, 0.1);
}

.table-title {
    display: flex;
    align-items: center;
    gap: 4px;
    padding: 12px 20px;
    border-bottom: 1px solid #e5e7eb;
    background: #f9fafb;
    font-size: 15px;
    font-weight: 500;
    line-height: 22px;
    color: #1f2937;
}

.table-title .icon {
    width: 14px;
}

table {
    width: 100%;
    border-collapse: collapse;
    table-layout: fixed;
}

th {
    height: 36px;
    padding: 0 14px;
    border-bottom: 2px solid #e5e7eb;
    background: #f9fafb;
    color: #6b7280;
    font-size: 11px;
    font-weight: 600;
    text-align: left;
    text-transform: uppercase;
    white-space: nowrap;
}

td {
    padding: 13px 14px;
    border-bottom: 1px solid #e5e7eb;
}

tbody tr:last-child td {
    border-bottom: none;
}

.paid {
    background: #d1fae5;
}

.cost {
    color: #dc3545;
}

.col-month {
    width: 8.8%;
}

.col-principal {
    width: 10.8%;
}

.col-interest {
    width: 13%;
}

.col-fee {
    width: 16%;
}

.col-cost {
    width: 9.7%;
}

.col-total {
    width: 14.1%;
}

.col-paid {
    width: 7.2%;
}

.col-date {
    width: 11%;
}
```
